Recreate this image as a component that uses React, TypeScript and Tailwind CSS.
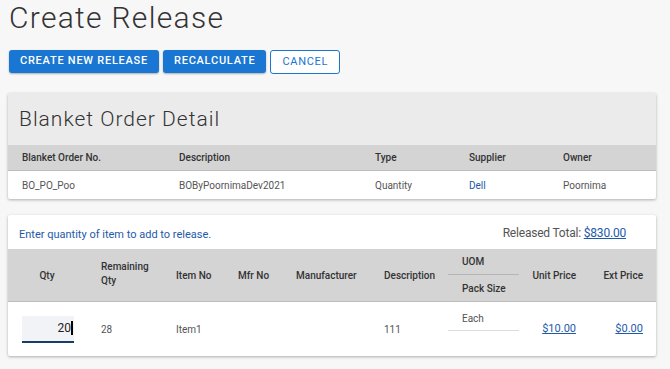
import React from "react";

const headCols = [
  { label: "Blanket Order No.", value: "BO_PO_Poo", w: "w-[157px]" },
  { label: "Description", value: "BOByPoornimaDev2021", w: "w-[196px]" },
  { label: "Type", value: "Quantity", w: "w-[94px]" },
  { label: "Supplier", value: "Dell", w: "w-[94px]", link: true },
  { label: "Owner", value: "Poornima", w: "flex-1" },
];

function BlanketOrderCard() {
  return (
    <div className="ml-2 mr-[14px] bg-white shadow-[0_1px_3px_rgba(0,0,0,0.3)] rounded-[2px]">
      <div className="bg-[#ebebeb] h-[52px] flex items-center px-[11px] pt-[2px]">
        <h2 className="text-[21px] font-light tracking-[1px] text-[#333]">Blanket Order Detail</h2>
      </div>
      <div className="flex items-center h-[26px] bg-[#d4d4d4] px-[14px] border-b border-[#bdbdbd] text-[10px] font-medium text-[#333]">
        {headCols.map((c) => (
          <div key={c.label} className={c.w}>{c.label}</div>
        ))}
      </div>
      <div className="flex items-center h-[28px] px-[14px] text-[10px] text-[#555]">
        {headCols.map((c) => (
          <div key={c.label} className={c.w + (c.link ? " text-[#1e5aa8]" : "")}>{c.value}</div>
        ))}
      </div>
    </div>
  );
}

function ReleaseItemsCard() {
  return (
    <div className="ml-2 mr-[14px] mt-4 bg-white shadow-[0_1px_3px_rgba(0,0,0,0.3)] rounded-[2px]">
      <div className="flex items-end justify-between h-[34px] pb-[7px] pl-[11px] pr-[30px]">
        <span className="text-[11px] text-[#1e5aa8] mb-[-1px]">Enter quantity of item to add to release.</span>
        <span className="text-[12px] text-[#555] tracking-[-0.2px]">
          Released Total: <a className="text-[#1e5aa8] underline" href="#">$830.00 </a>
        </span>
      </div>

      {/* header */}
      <div className="grid grid-cols-[93px_75px_62px_58px_88px_64px_71px_71px_1fr] h-[53px] bg-[#d4d4d4] border-b border-[#bdbdbd] text-[10px] font-medium text-[#333] items-center">
        <div className="text-center pr-[15px]">Qty</div>
        <div className="leading-[14px] pb-[2px]">Remaining<br />Qty</div>
        <div>Item No</div>
        <div>Mfr No</div>
        <div>Manufacturer</div>
        <div>Description</div>
        <div className="flex flex-col h-full">
          <div className="h-[26px] flex items-center pl-[14px] border-b border-[#b5b5b5]">UOM</div>
          <div className="flex-1 flex items-center pl-[14px]">Pack Size</div>
        </div>
        <div className="text-right pr-[14px]">Unit Price</div>
        <div className="text-right pr-[13px]">Ext Price</div>
      </div>

      {/* row */}
      <div className="grid grid-cols-[93px_75px_62px_58px_88px_64px_71px_71px_1fr] h-[54px] text-[10px] text-[#555] items-center">
        <div className="pl-[14px] pr-[27px]">
          <div className="h-[27px] bg-[#f1f3f6] border-b-2 border-[#1a3a6b] flex items-center justify-end pr-[1px] text-[12px] text-[#222]">
            20<span className="inline-block w-[2px] h-[14px] bg-black" />
          </div>
        </div>
        <div>28</div>
        <div>Item1</div>
        <div />
        <div />
        <div>111</div>
        <div className="h-full pt-[9px]">
          <div className="h-[20px] pl-[14px] border-b border-[#dcdcdc]">Each</div>
        </div>
        <div className="text-right pr-[14px] text-[11px]">
          <a className="text-[#1e5aa8] underline" href="#">$10.00</a>
        </div>
        <div className="text-right pr-[13px] text-[11px]">
          <a className="text-[#1e5aa8] underline" href="#">$0.00</a>
        </div>
      </div>
    </div>
  );
}

export default function App() {
  return (
    <div className="min-h-[369px] bg-[#f7f7f7] font-['Roboto',sans-serif] pb-4">
      <h1 className="pl-[9px] pt-0 text-[30px] leading-[36px] font-light tracking-[1.3px] text-[#333]">Create Release</h1>
      <div className="flex gap-[4px] pl-[9px] mt-[14px] mb-[19px]">
        <button className="h-[23px] px-[11px] rounded-[3px] bg-[#1976d2] text-white text-[11px] font-medium tracking-[0.75px] shadow-[0_1px_2px_rgba(0,0,0,0.3)]">
          CREATE NEW RELEASE
        </button>
        <button className="h-[23px] px-[11px] rounded-[3px] bg-[#1976d2] text-white text-[11px] font-medium tracking-[0.75px] shadow-[0_1px_2px_rgba(0,0,0,0.3)]">
          RECALCULATE
        </button>
        <button className="h-[24px] px-[11px] rounded-[3px] bg-white border border-[#1976d2] text-[#1976d2] text-[11px] tracking-[0.7px]">
          CANCEL
        </button>
      </div>
      <BlanketOrderCard />
      <ReleaseItemsCard />
    </div>
  );
}
